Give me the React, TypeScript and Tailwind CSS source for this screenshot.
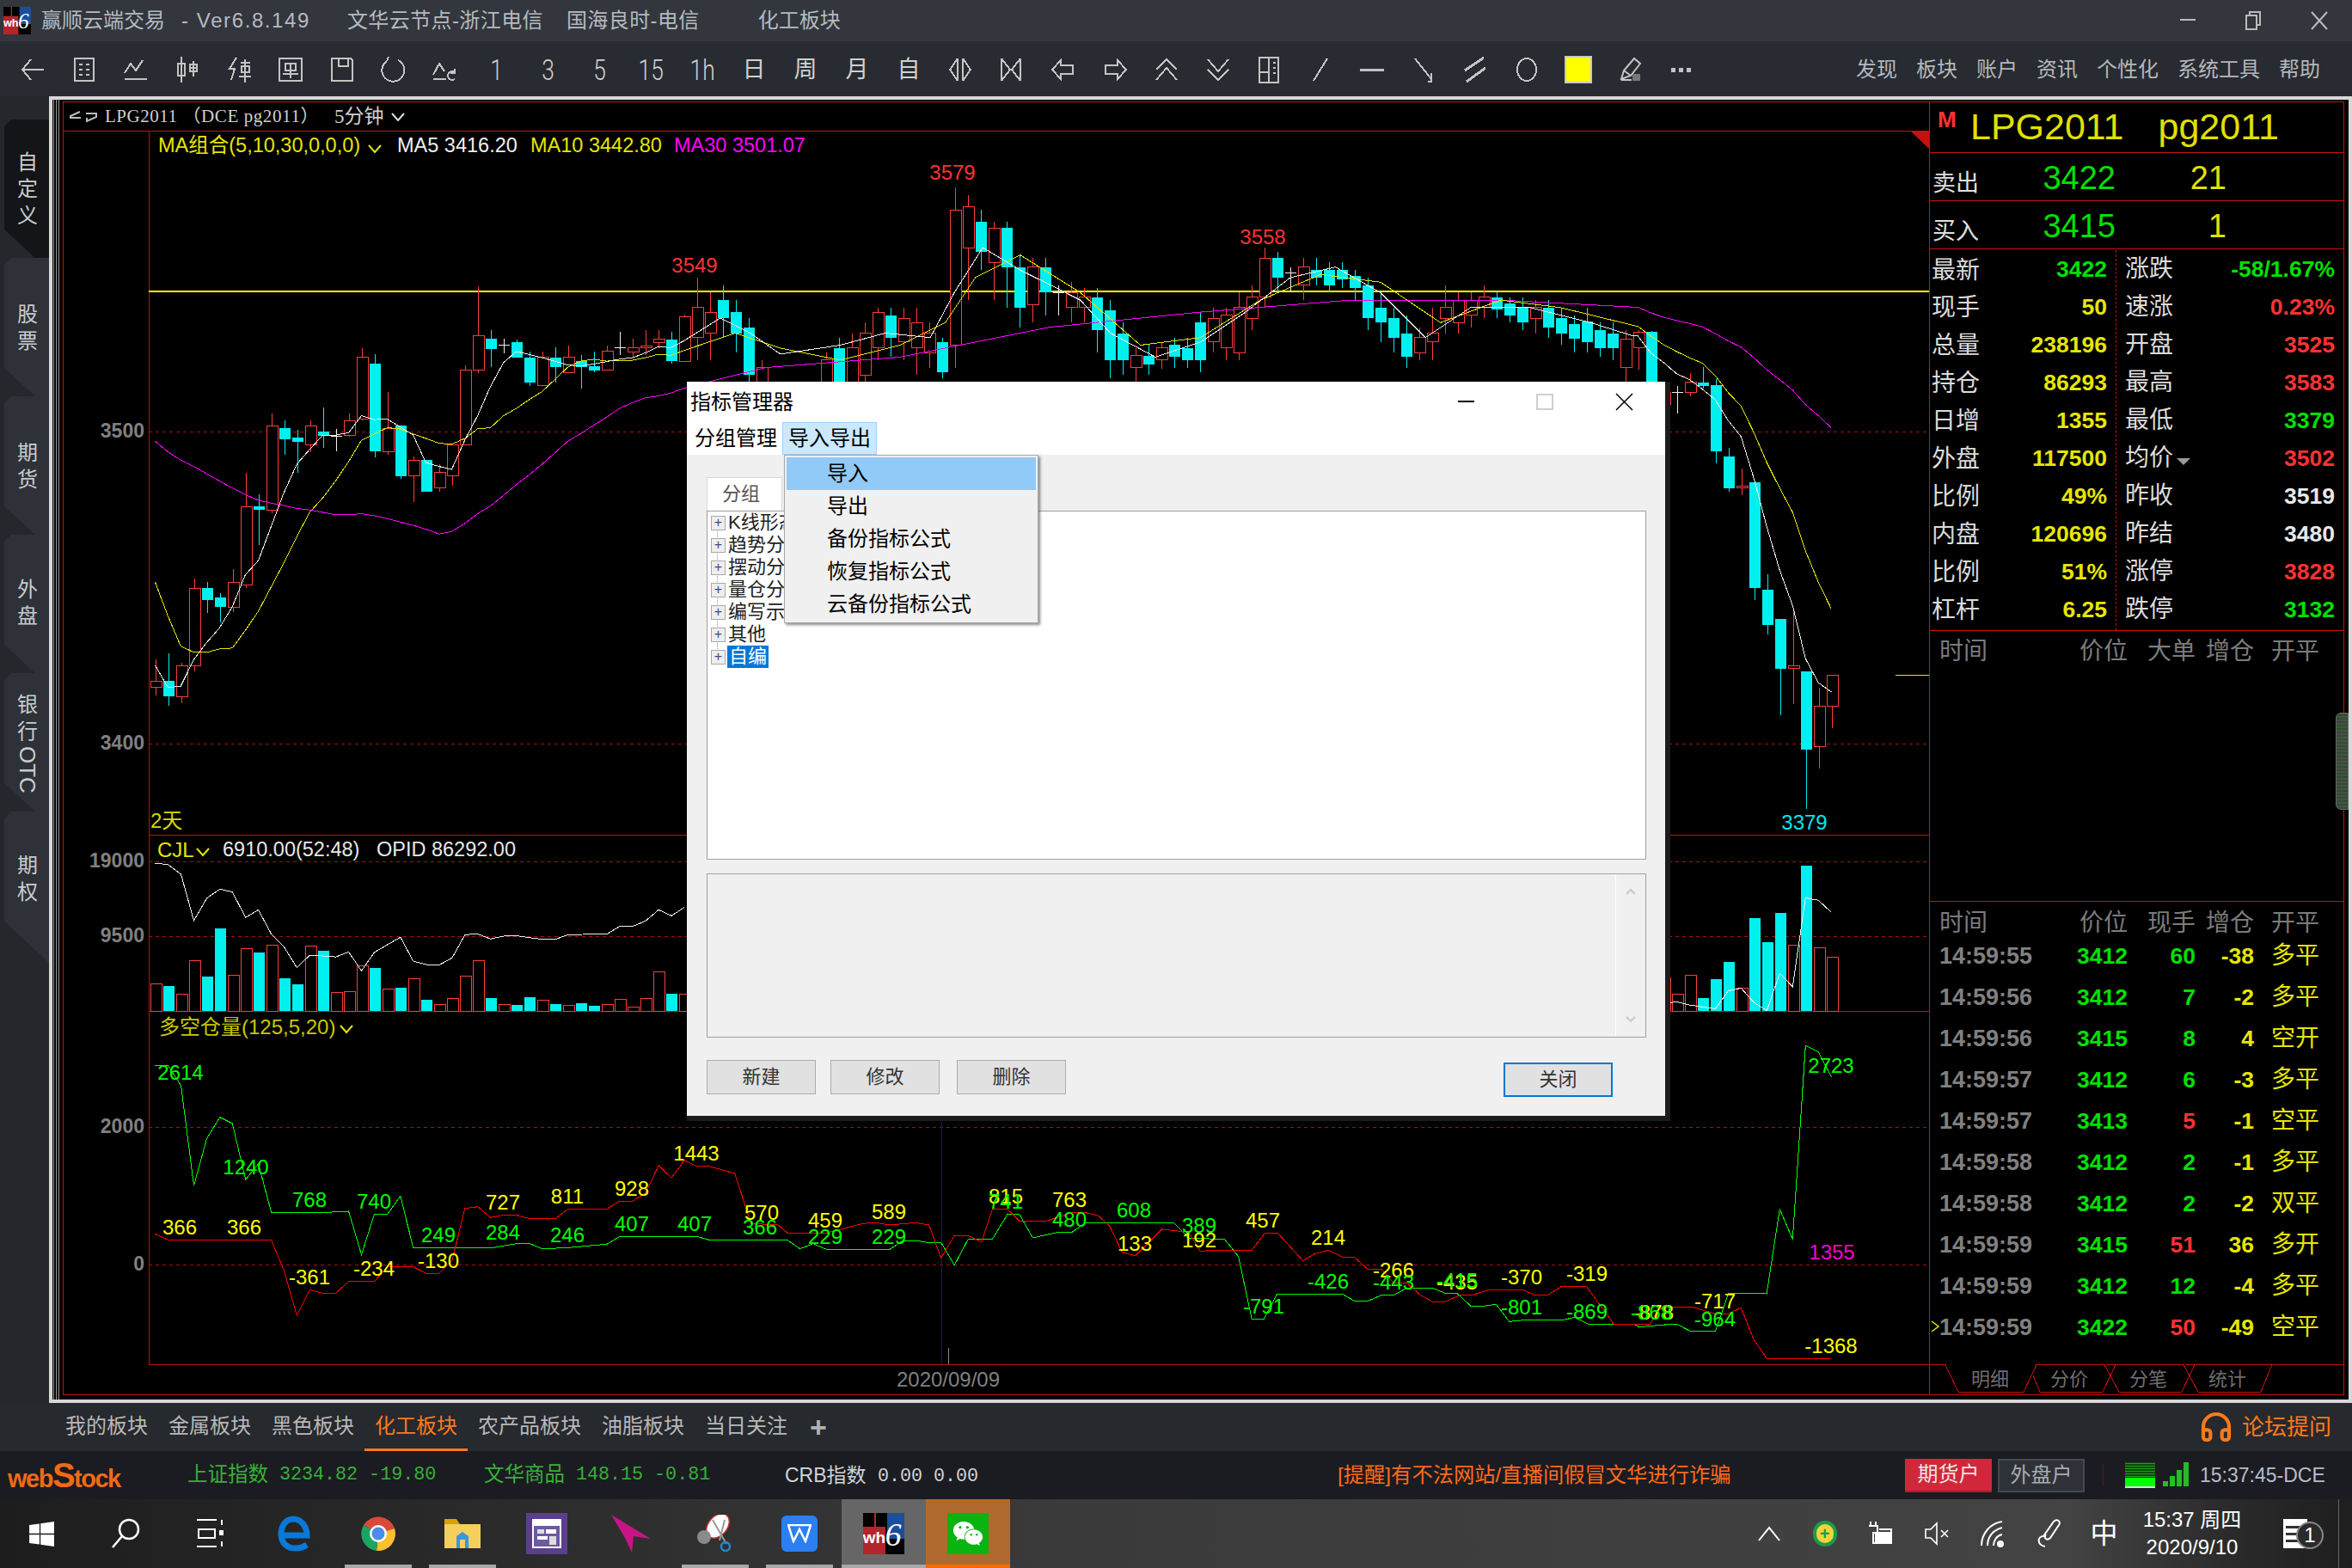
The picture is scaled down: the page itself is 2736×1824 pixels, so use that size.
import { Headphones } from "lucide-react";
import { FaWindows, FaWeixin } from "react-icons/fa";

type XY = [number, number];

// reads a flat list of points measured in a crop back to page pixels
const pts = (flat: number[], ox: number, sx: number, oy: number, sy: number): XY[] => {
  const out: XY[] = [];
  for (let i = 0; i < flat.length; i += 2) out.push([ox + flat[i] / sx, oy + flat[i + 1] / sy]);
  return out;
};
const toPoints = (p: XY[]) => p.map(([x, y]) => `${x.toFixed(1)},${y.toFixed(1)}`).join(" ");

const OV = 1.7455;

// i, wickTop, bodyTop, bodyBottom, wickBottom, colour
type Candle = [number, number, number, number, number, "r" | "c" | "w"];

const leftCandles: Candle[] = [
  [0, 1170, 1214, 1228, 1245, "r"], [1, 1157, 1214, 1246, 1266, "c"], [2, 1177, 1182, 1246, 1260, "r"],
  [3, 1002, 1022, 1182, 1195, "r"], [4, 1010, 1022, 1047, 1073, "c"], [5, 1033, 1041, 1061, 1093, "c"],
  [6, 983, 1010, 1061, 1072, "r"], [7, 783, 854, 1015, 1022, "r"], [8, 828, 853, 860, 932, "c"],
  [9, 660, 687, 860, 867, "r"], [10, 674, 691, 713, 745, "c"], [11, 695, 711, 720, 783, "c"],
  [12, 675, 687, 726, 740, "r"], [13, 648, 698, 707, 732, "c"], [14, 692, 708, 708, 738, "w"],
  [15, 660, 675, 706, 708, "r"], [16, 525, 544, 672, 675, "r"], [17, 538, 558, 739, 752, "c"],
  [18, 615, 692, 739, 745, "r"], [19, 686, 686, 791, 795, "c"], [20, 750, 758, 790, 843, "r"],
  [21, 757, 757, 822, 822, "c"], [22, 765, 783, 815, 822, "r"], [23, 725, 726, 790, 810, "r"],
  [24, 560, 571, 726, 727, "r"], [25, 397, 500, 571, 577, "r"], [26, 487, 506, 526, 565, "c"],
  [27, 505, 519, 519, 535, "w"], [28, 507, 512, 544, 545, "c"], [29, 532, 544, 597, 604, "c"],
  [30, 532, 544, 603, 604, "r"], [31, 524, 544, 565, 597, "c"], [32, 519, 544, 576, 577, "r"],
  [33, 540, 552, 565, 608, "c"], [34, 532, 563, 572, 575, "c"], [35, 520, 532, 571, 571, "r"],
  [36, 492, 524, 524, 540, "w"], [37, 506, 525, 533, 544, "r"], [38, 487, 520, 525, 540, "r"],
  [39, 487, 507, 513, 525, "r"], [40, 492, 507, 552, 558, "c"], [41, 455, 461, 552, 552, "r"],
];

// the stretch above the dialog, read from the full picture
const midCandles: Candle[] = [
  [42, 185, 205, 225, 240, "r"], [43, 195, 208, 222, 240, "r"], [44, 190, 200, 212, 225, "c"],
  [45, 200, 208, 222, 235, "c"], [46, 212, 218, 250, 260, "c"], [47, 240, 245, 260, 260, "r"],
  [52, 235, 240, 260, 260, "r"], [53, 225, 232, 255, 260, "c"], [54, 222, 232, 255, 260, "r"],
  [55, 215, 222, 250, 260, "r"], [56, 205, 208, 232, 240, "r"], [57, 205, 210, 225, 238, "c"],
  [59, 205, 215, 232, 250, "r"], [60, 215, 222, 235, 245, "r"], [61, 225, 228, 248, 252, "c"],
  [62, 125, 140, 230, 245, "r"], [63, 130, 138, 165, 200, "r"], [64, 140, 148, 168, 180, "c"],
  [65, 148, 152, 175, 200, "r"], [66, 148, 152, 178, 205, "c"], [67, 170, 178, 205, 218, "c"],
  [68, 172, 178, 203, 215, "r"], [69, 172, 178, 195, 210, "c"], [70, 190, 195, 197, 210, "w"],
  [71, 188, 195, 205, 215, "r"], [72, 192, 198, 205, 215, "r"], [73, 192, 198, 220, 235, "c"],
  [74, 200, 207, 240, 252, "c"], [75, 215, 222, 240, 250, "c"], [76, 232, 237, 245, 255, "r"],
  [77, 230, 237, 243, 250, "c"], [78, 228, 232, 240, 246, "r"], [79, 225, 230, 238, 245, "c"],
  [80, 225, 232, 240, 245, "c"], [81, 208, 215, 240, 248, "c"], [82, 205, 212, 228, 235, "r"],
  [83, 205, 210, 232, 240, "r"], [84, 195, 205, 235, 240, "r"], [85, 190, 198, 212, 220, "r"],
  [86, 165, 172, 198, 205, "r"], [87, 168, 172, 185, 195, "c"], [88, 178, 182, 186, 195, "w"],
  [89, 172, 178, 190, 200, "r"], [90, 172, 180, 185, 190, "c"], [91, 175, 180, 190, 195, "c"],
  [92, 175, 180, 186, 192, "c"], [93, 180, 184, 192, 200, "c"], [94, 185, 190, 212, 220, "c"],
  [95, 195, 205, 215, 228, "c"], [96, 205, 212, 225, 235, "c"], [97, 210, 222, 238, 245, "c"],
  [98, 218, 225, 235, 240, "r"], [99, 205, 222, 228, 240, "r"], [100, 190, 205, 212, 222, "r"],
  [101, 195, 200, 215, 222, "r"], [102, 195, 200, 210, 218, "r"], [103, 190, 198, 205, 212, "r"],
  [104, 195, 198, 206, 212, "c"], [105, 198, 202, 210, 215, "c"], [106, 198, 205, 215, 220, "c"],
  [107, 200, 205, 212, 222, "r"], [108, 200, 205, 218, 225, "c"], [109, 205, 212, 222, 230, "c"],
  [110, 210, 216, 226, 235, "c"], [111, 205, 214, 228, 235, "c"], [112, 215, 220, 232, 238, "c"],
  [113, 215, 222, 232, 240, "c"], [114, 220, 226, 245, 255, "r"], [58, 205, 212, 228, 240, "r"],
];

const rightCandles: Candle[] = [
  [115, 488, 492, 525, 570, "r"], [116, 490, 492, 620, 620, "c"], [117, 600, 616, 642, 650, "r"],
  [118, 603, 616, 616, 660, "w"], [119, 577, 596, 616, 624, "r"], [120, 564, 596, 604, 608, "c"],
  [121, 590, 602, 738, 764, "c"], [122, 732, 750, 815, 822, "c"], [123, 775, 810, 815, 829, "r"],
  [124, 802, 802, 1022, 1047, "c"], [125, 994, 1026, 1098, 1118, "c"], [126, 1085, 1085, 1189, 1285, "c"],
  [127, 1065, 1182, 1189, 1262, "r"], [128, 1194, 1194, 1357, 1480, "c"], [129, 1228, 1266, 1350, 1396, "r"],
  [130, 1202, 1202, 1266, 1312, "r"],
];

const candles: Candle[] = [
  ...leftCandles.map((c) => [c[0], ...c.slice(1, 5).map((v) => 110 + (v as number) / 1.78), c[5]] as Candle),
  ...midCandles.map((c) => [c[0], ...c.slice(1, 5).map((v) => (v as number) * OV), c[5]] as Candle),
  ...rightCandles.map((c) => [c[0], ...c.slice(1, 5).map((v) => 110 + (v as number) / 1.78), c[5]] as Candle),
];

const ma5: XY[] = [
  ...pts([354,1182,383,1228,412,1225,442,1170,471,1135,500,1105,530,1060,559,995,589,965,618,895,647,825,677,765,706,735,736,705,765,705,795,700,824,665,853,673,883,672,912,688,942,705,971,762,1001,770,1030,776,1060,715,1089,665,1118,605,1148,555,1177,532,1206,538,1236,545,1265,552,1294,560,1324,562,1353,558,1383,553,1412,548,1442,545,1471,535,1500,522,1530,524,1559,510], 0, 1.96, 110, 1.78),
  ...pts([480,212,500,222,520,236,560,230,590,222,620,225,636,195,655,165,680,180,700,190,720,200,740,222,770,238,800,228,830,208,860,185,890,178,920,195,950,225,980,205,1020,205,1060,215], 0, 1 / OV, 0, 1 / OV),
  ...pts([0,500,16,500,61,535,106,555,151,578,196,590,241,610,286,632,331,675,376,708,421,795,466,895,511,985,556,1058,601,1168,646,1218,691,1237], 1900, 3, 110, 1.78),
];
const ma10: XY[] = [
  ...pts([354,1010,383,1080,412,1142,442,1155,471,1155,500,1148,530,1146,559,1110,589,1070,618,1020,647,970,677,915,706,865,736,835,765,800,795,760,824,716,853,703,883,690,912,692,942,703,971,712,1001,722,1030,724,1060,712,1089,692,1118,690,1148,665,1177,650,1206,632,1236,615,1265,590,1294,565,1324,552,1353,548,1383,552,1412,550,1442,550,1471,545,1500,538,1530,540,1559,530], 0, 1.96, 110, 1.78),
  ...pts([490,222,520,232,560,240,600,230,630,215,650,185,680,170,720,195,760,230,800,225,840,200,880,183,920,188,960,215,1000,200,1040,205], 0, 1 / OV, 0, 1 / OV),
  ...pts([0,478,16,480,61,500,106,518,151,532,196,545,241,556,286,582,331,617,376,645,421,700,466,762,511,815,556,865,601,945,646,1010,691,1065], 1900, 3, 110, 1.78),
];
const ma30: XY[] = [
  ...pts([354,718,383,740,412,757,442,770,471,785,500,800,530,815,559,828,589,840,618,846,647,851,677,857,706,860,736,865,765,870,795,870,824,868,853,872,883,878,912,885,942,892,971,900,1001,910,1030,905,1060,888,1089,868,1118,852,1148,830,1177,808,1206,788,1236,765,1265,742,1294,718,1324,702,1353,685,1383,668,1412,650,1442,638,1471,628,1500,624,1530,618,1559,608], 0, 1.96, 110, 1.78),
  ...pts([510,245,600,238,700,218,800,208,900,200,1000,200], 0, 1 / OV, 0, 1 / OV),
  ...pts([0,440,16,440,61,452,106,461,151,468,196,474,241,481,286,495,331,510,376,523,421,545,466,570,511,590,556,612,601,642,646,665,691,690], 1900, 3, 110, 1.78),
];

const volumes: [number, string][] = [
  [452,"r"],[458,"c"],[481,"r"],[386,"r"],[431,"c"],[294,"c"],[427,"r"],[351,"r"],[363,"c"],[342,"r"],[436,"c"],[453,"c"],[344,"r"],[358,"c"],[476,"r"],[474,"r"],[400,"r"],[407,"c"],[466,"r"],[463,"c"],[437,"r"],[497,"c"],[511,"r"],[493,"r"],[430,"r"],[386,"r"],[492,"c"],[511,"r"],[512,"c"],[490,"c"],[498,"r"],[510,"c"],[513,"r"],[507,"c"],[514,"c"],[511,"r"],[496,"r"],[518,"r"],[493,"r"],[417,"r"],[480,"c"],[481,"r"],
];
const volumesRight: [number, number, string][] = [
  [117,435,"r"],[118,481,"r"],[119,427,"r"],[120,492,"c"],[121,439,"c"],[122,390,"c"],[123,464,"r"],[124,265,"c"],[125,333,"c"],[126,250,"c"],[127,342,"r"],[128,115,"c"],[129,349,"r"],[130,376,"r"],
];
const volLine: XY[] = [
  ...pts([73,108,110,112,146,140,182,272,218,208,255,182,290,190,327,263,363,241,399,310,435,347,471,406,507,370,580,375,616,361,652,415,688,362,761,319,797,387,833,397,870,398,906,378,942,312,978,310,1014,324,1050,316,1086,315,1159,325,1195,325,1231,312,1340,310,1376,288,1412,288,1448,273,1485,241,1521,258,1557,234], 150, 2.41, 960, 2.45),
];
const volLineRight: XY[] = pts([120,507,151,503,196,512,241,518,286,523,331,472,376,464,421,505,466,528,511,422,556,460,601,207,646,214,691,248], 1900, 3, 960, 2.45);

const greenLine: XY[] = [
  ...pts([73,685,110,685,146,742,182,1027,218,893,255,832,290,850,327,1010,363,965,399,1103,435,1103,561,1103,616,1100,652,1224,688,1108,725,1108,761,1057,797,1204,1020,1204,1090,1192,1123,1192,1159,1207,1231,1204,1340,1194,1376,1172,1557,1172], 150, 2.41, 960, 2.45),
  ...pts([0,445,15,445,35,457,165,457,186,488,208,470,230,490,335,490,356,460,380,460,398,466,420,466,442,545,465,454,505,454,530,368,550,368,572,450,615,430,637,430,660,397,806,397,830,450,890,455,913,515,935,733,955,733,977,646,1085,646,1105,670,1128,670,1150,650,1170,650,1192,625,1235,625,1255,643,1275,643,1298,688,1320,688,1340,682,1362,742,1385,737,1450,737,1470,727,1492,750,1568,750], 800, 1.425, 1290, 3),
  ...pts([20,1430,130,1422,152,1422,197,1441,287,1441,332,1333,466,1333,511,1094,556,1180,601,628,646,646,691,717], 1900, 3, 960, 2.45),
];
const redLine: XY[] = [
  ...pts([73,1165,110,1182,399,1182,435,1270,471,1398,507,1324,544,1334,580,1334,616,1300,688,1300,725,1258,797,1258,833,1277,870,1277,906,1240,942,1092,978,1087,1014,1118,1050,1111,1086,1111,1123,1121,1195,1121,1231,1094,1340,1094,1376,1071,1412,1071,1448,1048,1485,970,1521,1005,1557,955], 150, 2.41, 960, 2.45),
  ...pts([0,185,15,200,35,200,78,225,105,400,150,405,165,433,230,433,290,400,312,397,335,405,378,397,400,405,420,520,442,442,465,442,487,465,505,350,530,350,550,391,595,391,640,360,660,362,680,372,700,410,720,500,742,512,786,420,830,430,850,497,870,493,935,493,957,433,978,433,1020,530,1040,505,1062,493,1085,517,1105,517,1128,560,1150,560,1170,607,1192,607,1215,650,1235,673,1255,673,1280,650,1300,650,1325,633,1385,632,1405,650,1425,650,1448,620,1490,620,1535,750], 800, 1.425, 1290, 3),
  ...pts([60,1421,85,1380,130,1373,205,1373,285,1392,332,1392,376,1375,420,1465,466,1520,691,1520], 1900, 3, 960, 2.45),
];

const GREEN = "#00ff00";
const YEL = "#ffff00";
const oscLabels: [string, number, number, string][] = [
  ["2614",210,1248,GREEN],["1240",286,1358,GREEN],["768",360,1396,GREEN],["740",435,1398,GREEN],["366",209,1428,YEL],["366",284,1428,YEL],
  ["249",510,1437,GREEN],["727",585,1399,YEL],["811",660,1392,YEL],["928",735,1383,YEL],["284",585,1434,GREEN],["246",660,1437,GREEN],
  ["407",735,1424,GREEN],["407",808,1424,GREEN],["-361",360,1486,YEL],["-234",435,1476,YEL],["-130",510,1467,YEL],["1443",810,1342,YEL],
  ["570",886,1411,YEL],["366",884,1428,GREEN],["459",960,1420,YEL],["229",960,1439,GREEN],["589",1034,1410,YEL],["229",1034,1439,GREEN],
  ["815",1170,1392,YEL],["741",1170,1398,GREEN],["763",1244,1396,YEL],["480",1244,1419,GREEN],["608",1319,1408,GREEN],["133",1320,1447,YEL],
  ["389",1395,1426,GREEN],["192",1395,1443,YEL],["457",1469,1420,YEL],["214",1545,1440,YEL],["-791",1470,1520,GREEN],["-426",1545,1491,GREEN],
  ["-266",1621,1478,YEL],["-443",1621,1492,GREEN],["-435",1695,1492,YEL],["-415",1695,1490,GREEN],["-370",1770,1486,YEL],["-319",1846,1482,YEL],
  ["-801",1770,1521,GREEN],["-869",1846,1526,GREEN],["-878",1923,1527,YEL],["-868",1921,1527,GREEN],["-717",1995,1514,YEL],["-964",1995,1535,GREEN],
  ["2723",2130,1240,GREEN],["1355",2131,1457,"#ff00c8"],["-1368",2130,1566,YEL],
];

const sans = "font-['Liberation_Sans','Noto_Sans_CJK_SC',sans-serif]";

function Wh6Logo({ size }: { size: number }) {
  return (
    <svg width={size} height={size} viewBox="0 0 48 48" className="flex-none">
      <rect width="48" height="48" fill="#000" />
      <rect x="0" y="16" width="26" height="32" fill="#b3252a" />
      <rect x="28" y="0" width="20" height="30" fill="#1b4f9c" />
      <rect x="13" y="0" width="2" height="16" fill="#b3252a" />
      <text x="13" y="35" fontSize="19" fontWeight="700" fontFamily="Liberation Sans" fill="#fff" textAnchor="middle">wh</text>
      <text x="35" y="38" fontSize="38" fontStyle="italic" fontFamily="Liberation Serif" fill="#fff" textAnchor="middle">6</text>
    </svg>
  );
}

const toolIcons: Record<string, React.ReactNode> = {
  back: <path d="M29 16H5M14 4L4 16L14 28" />,
  list: <path d="M5 3H27V29H5ZM10 10H14M18 10H22M10 16H14M18 16H22M10 22H14M18 22H22" />,
  line: <path d="M3 20L10 9L16 17L24 5M3 27H29" />,
  kline: <path d="M9 1V31M5 9H13V23H5ZM23 6V24M19 10H27V18H19ZM19 14H27" />,
  zen: <path d="M13 2L5 15H11L7 28M18 8H29M19 12H28V19H19ZM23 4V31M16 24H30" />,
  single: <path d="M3 3H29V29H3ZM10 9H22V17H10ZM16 9V26M7 21H25" />,
  save: <path d="M4 3H26L28 5V29H4ZM12 3V12H23V3" />,
  redo: <path d="M21 5A13 13 0 1 1 8 6M8 6L10 1" />,
  exch: <path d="M3 22L10 9L16 18M3 27H18M28 19A5 5 0 1 0 28 27M28 15V20H23" />,
  fold: <path d="M13 3L4 16L13 29M19 3L28 16L19 29M13 3V29M19 3V29" />,
  unfold: <path d="M4 3L14 16L4 29M26 3L16 16L26 29M4 3V29M26 3V29" />,
  prev: <path d="M3 16L13 5V11H27V21H13V27Z" />,
  next: <path d="M29 16L19 5V11H5V21H19V27Z" />,
  up: <path d="M4 16L16 4L28 16M4 28L16 14L28 28" />,
  down: <path d="M4 4L16 18L28 4M4 16L16 28L28 16" />,
  panel: <path d="M5 2H27V31H5ZM16 2V31M5 19H16M21 8H24M21 14H24M21 20H24" />,
  slash: <path d="M8 29L24 3" />,
  dash: <path d="M2 16H30" strokeWidth="3" />,
  ray: <path d="M6 3L25 27M25 20V30H21" />,
  par: <path d="M4 17L26 2M6 30L28 14" strokeWidth="3" />,
  ellipse: <ellipse cx="16" cy="16" rx="11" ry="13" />,
  erase: <path d="M6 27L9 17L21 3L28 9L17 23ZM6 28H18M9 17L17 23" />,
};

type ToolItem = { icon?: string; label?: string };
const toolbar: ToolItem[] = [
  { icon: "back" }, { icon: "list" }, { icon: "line" }, { icon: "kline" }, { icon: "zen" }, { icon: "single" }, { icon: "save" }, { icon: "redo" }, { icon: "exch" },
  { label: "1" }, { label: "3" }, { label: "5" }, { label: "15" }, { label: "1h" }, { label: "日" }, { label: "周" }, { label: "月" }, { label: "自" },
  { icon: "fold" }, { icon: "unfold" }, { icon: "prev" }, { icon: "next" }, { icon: "up" }, { icon: "down" }, { icon: "panel" }, { icon: "slash" }, { icon: "dash" }, { icon: "ray" }, { icon: "par" }, { icon: "ellipse" },
];

function TitleBar() {
  return (
    <div className="h-12 flex-none flex items-center bg-[#33363c] text-[24px] text-[#b4bac2] pl-1 leading-none">
      <Wh6Logo size={32} />
      <span className="ml-3">赢顺云端交易</span>
      <span className="ml-[19px] tracking-[1.6px]">- Ver6.8.149</span>
      <span className="ml-[43px] tracking-[0.4px]">文华云节点-浙江电信</span>
      <span className="ml-[27px] tracking-[0.4px]">国海良时-电信</span>
      <span className="ml-[68px]">化工板块</span>
      <div className="ml-auto flex">
        <div className="w-[76.5px] flex justify-center">
          <svg width="22" height="22" viewBox="0 0 22 22"><path d="M2 11H20" stroke="#bbb" strokeWidth="2" /></svg>
        </div>
        <div className="w-[76.5px] flex justify-center">
          <svg width="22" height="24" viewBox="0 0 22 24" fill="none" stroke="#bbb" strokeWidth="2"><path d="M3 6H15V22H3ZM7 6V2H19V17H15" /></svg>
        </div>
        <div className="w-[76.5px] flex justify-center">
          <svg width="24" height="24" viewBox="0 0 24 24" fill="none" stroke="#bbb" strokeWidth="2"><path d="M3 2L21 22M21 2L3 22" /></svg>
        </div>
      </div>
    </div>
  );
}

function Toolbar() {
  return (
    <div className="h-16 flex-none flex items-center bg-[#282b31] pl-[8px] pr-[37px] pt-[2px] text-[#d0d0d0] leading-none">
      {toolbar.map((t, i) => (
        <div key={i} className="w-[59.95px] flex-none flex justify-center items-center">
          {t.icon ? (
            <svg width="32" height="32" viewBox="0 0 32 32" fill="none" stroke="#c4c4c4" strokeWidth="2" shapeRendering="crispEdges">
              {toolIcons[t.icon]}
            </svg>
          ) : /^[0-9]/.test(t.label ?? "") ? (
            <span className="inline-block text-[31px] font-light font-['Roboto',sans-serif] scale-x-[0.85] scale-y-[1.05]">{t.label}</span>
          ) : (
            <span className="text-[27px]">{t.label}</span>
          )}
        </div>
      ))}
      <div className="w-[59.95px] flex-none flex justify-center">
        <div className="w-8 h-8 bg-[#ffff00] border-2 border-[#c8c8c8]" />
      </div>
      <div className="w-[59.95px] flex-none flex justify-center">
        <svg width="32" height="32" viewBox="0 0 32 32" fill="none" stroke="#c4c4c4" strokeWidth="2">
          {toolIcons.erase}
          <rect x="19" y="21" width="9" height="8" fill="#777" stroke="none" />
        </svg>
      </div>
      <div className="w-[59.95px] flex-none flex justify-center gap-[4px]">
        <div className="w-[5px] h-[5px] bg-[#c4c4c4]" />
        <div className="w-[5px] h-[5px] bg-[#c4c4c4]" />
        <div className="w-[5px] h-[5px] bg-[#c4c4c4]" />
      </div>
      <div className="ml-auto flex gap-[22px] text-[24px] text-[#b4b8bc]">
        <span>发现</span><span>板块</span><span>账户</span><span>资讯</span><span>个性化</span><span>系统工具</span><span>帮助</span>
      </div>
    </div>
  );
}

function SideTabs() {
  const tabs: { lines: string[]; cls: string }[] = [
    { lines: ["自", "定", "义"], cls: "pt-[34px] bg-[#141518]" },
    { lines: ["股", "票"], cls: "pt-[50px] bg-[#2e3138]" },
    { lines: ["期", "货"], cls: "pt-[50px] bg-[#2e3138]" },
    { lines: ["外", "盘"], cls: "pt-[48px] bg-[#2e3138]" },
    { lines: ["银", "行"], cls: "pt-[21px] bg-[#2e3138]" },
    { lines: ["期", "权"], cls: "pt-[47px] bg-[#2e3138]" },
  ];
  return (
    <div className="w-[57px] flex-none bg-[#24272c] pt-[27px] pl-[5px] flex flex-col text-[#c9cbce] text-[24px]">
      {tabs.map((t, i) => (
        <div key={i} className={`h-[176px] mb-[-15px] flex-none flex flex-col items-center pl-[2px] leading-[31px] [clip-path:polygon(8px_0,100%_0,100%_100%,0_calc(100%-48px),0_8px)] ${t.cls}`}>
          {t.lines.map((l) => <span key={l}>{l}</span>)}
          {i === 4 && <span className="[writing-mode:vertical-rl] text-[26px] leading-none mt-[2px]">OTC</span>}
        </div>
      ))}
    </div>
  );
}

function Txt(props: { x: number; y: number; c: string; t: string; size?: number; bold?: boolean; anchor?: "start" | "middle" | "end"; }) {
  return (
    <text x={props.x} y={props.y - 1} fill={props.c} fontSize={props.size ?? 24} fontWeight={props.bold ? 700 : 400} textAnchor={props.anchor ?? "middle"} dominantBaseline="central">
      {props.t}
    </text>
  );
}

function Chevron({ x, y, c }: { x: number; y: number; c: string }) {
  return <polyline points={`${x},${y} ${x + 7},${y + 8} ${x + 14},${y}`} fill="none" stroke={c} strokeWidth="2" />;
}

function PriceChart() {
  const PLOT_L = 173;
  const dashes = [502, 865, 1002, 1089, 1311, 1471];
  const solids = [971, 1176, 1587];
  const cx = (i: number) => Math.round(180.6 + 15 * i);
  const colour = { r: "#ff3c3c", c: "#00f0f0", w: "#f0f0f0" };
  return (
    <svg viewBox="74 153 2170 1469" width="2170" height="1469" className={`block flex-none ${sans}`}>
      <line x1={PLOT_L} x2={PLOT_L} y1="153" y2="1587" stroke="#c01010" strokeWidth="1" shapeRendering="crispEdges" />
      {dashes.map((y) => (
        <line key={y} x1={PLOT_L} x2="2244" y1={y} y2={y} stroke="#a81010" strokeDasharray="4 4" shapeRendering="crispEdges" />
      ))}
      {solids.map((y) => (
        <line key={y} x1={PLOT_L} x2="2244" y1={y} y2={y} stroke="#c01010" strokeWidth="1" shapeRendering="crispEdges" />
      ))}
      <line x1={PLOT_L} x2="2244" y1="339" y2="339" stroke="#ffff00" strokeWidth="2" shapeRendering="crispEdges" />
      <line x1="2205" x2="2244" y1="785" y2="785" stroke="#e6e600" shapeRendering="crispEdges" />
      <polygon points="2223,153 2244,153 2244,173" fill="#c81010" />
      <line x1="1095" x2="1095" y1="1299" y2="1587" stroke="#14148c" shapeRendering="crispEdges" />
      <line x1="1103" x2="1103" y1="1568" y2="1587" stroke="#888" shapeRendering="crispEdges" />

      <g shapeRendering="crispEdges">
        {candles.map(([i, wt, bt, bb, wb, k]) => {
          const x = cx(i);
          const c = colour[k];
          return (
            <g key={i}>
              <line x1={x + 0.5} x2={x + 0.5} y1={wt} y2={wb} stroke={c} strokeWidth="1" />
              {k === "w" ? (
                <line x1={x - 6} x2={x + 7} y1={bt} y2={bt} stroke={c} strokeWidth="1" />
              ) : (
                <rect x={x - 6} y={bt} width="13" height={Math.max(bb - bt, 2)} fill={k === "c" ? c : "#000"} stroke={k === "c" ? "none" : c} strokeWidth="1" />
              )}
            </g>
          );
        })}
        {volumes.map(([top, k], i) => {
          const y = 960 + top / 2.45;
          const x = cx(i);
          return <rect key={i} x={x - 6} y={y} width="13" height={1176 - y} fill={k === "c" ? colour.c : "#000"} stroke={k === "c" ? "none" : colour.r} strokeWidth="1" />;
        })}
        {volumesRight.map(([i, top, k]) => {
          const y = 960 + top / 2.45;
          const x = cx(i);
          return <rect key={i} x={x - 6} y={y} width="13" height={1176 - y} fill={k === "c" ? colour.c : "#000"} stroke={k === "c" ? "none" : colour.r} strokeWidth="1" />;
        })}
        <polyline points={toPoints(ma30)} fill="none" stroke="#ff00ff" />
        <polyline points={toPoints(ma10)} fill="none" stroke="#e6e600" />
        <polyline points={toPoints(ma5)} fill="none" stroke="#f0f0f0" />
        <polyline points={toPoints(volLine)} fill="none" stroke="#f0f0f0" />
        <polyline points={toPoints(volLineRight)} fill="none" stroke="#f0f0f0" />
        <polyline points={toPoints(greenLine)} fill="none" stroke="#00ff00" />
        <polyline points={toPoints(redLine)} fill="none" stroke="#ff0000" />
      </g>

      <Txt x={184} y={170} c="#e6e600" t="MA组合(5,10,30,0,0,0)" anchor="start" size={23.5} />
      <Chevron x={429} y={169} c="#e6e600" />
      <Txt x={462} y={170} c="#f0f0f0" t="MA5 3416.20" anchor="start" size={23.5} />
      <Txt x={617} y={170} c="#e6e600" t="MA10 3442.80" anchor="start" size={23.5} />
      <Txt x={784} y={170} c="#ff00ff" t="MA30 3501.07" anchor="start" size={23.5} />

      <Txt x={168} y={502} c="#808080" t="3500" bold anchor="end" size={23} />
      <Txt x={168} y={865} c="#808080" t="3400" bold anchor="end" size={23} />
      <Txt x={168} y={1002} c="#808080" t="19000" bold anchor="end" size={23} />
      <Txt x={168} y={1089} c="#808080" t="9500" bold anchor="end" size={23} />
      <Txt x={168} y={1311} c="#808080" t="2000" bold anchor="end" size={23} />
      <Txt x={168} y={1471} c="#808080" t="0" bold anchor="end" size={23} />

      <Txt x={808} y={309} c="#ff3232" t="3549" />
      <Txt x={1108} y={201} c="#ff3232" t="3579" />
      <Txt x={1469} y={276} c="#ff3232" t="3558" />
      <Txt x={2099} y={957} c="#00e8f0" t="3379" />
      <Txt x={175} y={955} c="#d8d800" t="2天" anchor="start" />

      <Txt x={183} y={989} c="#e6e600" t="CJL" anchor="start" />
      <Chevron x={229} y={987} c="#e6e600" />
      <Txt x={259} y={989} c="#e8e8e8" t="6910.00(52:48)" anchor="start" size={23.5} />
      <Txt x={438} y={989} c="#e8e8e8" t="OPID 86292.00" anchor="start" size={23.5} />

      <Txt x={185} y={1195} c="#c8c800" t="多空仓量(125,5,20)" anchor="start" />
      <Chevron x={396} y={1193} c="#e6e600" />

      {oscLabels.map(([t, x, y, c], i) => <Txt key={i} x={x} y={y} c={c} t={t} />)}

      <Txt x={1103} y={1605} c="#808080" t="2020/09/09" />
    </svg>
  );
}

function ChartPane() {
  return (
    <div className="w-[2170px] flex-none flex flex-col">
      <div className={`h-[34px] flex-none flex items-center border-b border-[#c81010] pl-[6px] text-[21px] leading-none text-[#d0d0d0] font-['Liberation_Serif','Noto_Sans_CJK_SC',serif]`}>
        <svg width="34" height="14" viewBox="0 0 34 14" fill="none" stroke="#bbb" strokeWidth="2"><path d="M13 1L2 6V8H14M20 3H32V7L21 12V8" /></svg>
        <span className="ml-[8px] tracking-[0.5px]">LPG2011</span>
        <span className="ml-[6px] tracking-[0.6px]">（DCE pg2011）</span>
        <span className="ml-[18px] text-[23px]">5分钟</span>
        <svg className="ml-[8px]" width="16" height="10" viewBox="0 0 16 10" fill="none" stroke="#ddd" strokeWidth="2"><path d="M1 1L8 9L15 1" /></svg>
      </div>
      <PriceChart />
    </div>
  );
}

const G = "text-[#00e000]";
const Y = "text-[#e6e600]";
const R = "text-[#ff3232]";
const W = "text-[#e8e8e8]";

const quoteRows: [string, string, string, string, string, boolean?][] = [
  ["最新", "3422", "涨跌", "-58/1.67%", G],
  ["现手", "50", "速涨", "0.23%", R],
  ["总量", "238196", "开盘", "3525", R],
  ["持仓", "86293", "最高", "3583", R],
  ["日增", "1355", "最低", "3379", G],
  ["外盘", "117500", "均价", "3502", R, true],
  ["比例", "49%", "昨收", "3519", W],
  ["内盘", "120696", "昨结", "3480", W],
  ["比例", "51%", "涨停", "3828", R],
  ["杠杆", "6.25", "跌停", "3132", G],
];

const ticks: [string, string, string, string, string, string][] = [
  ["14:59:55", "3412", "60", "-38", "多平", G],
  ["14:59:56", "3412", "7", "-2", "多平", G],
  ["14:59:56", "3415", "8", "4", "空开", G],
  ["14:59:57", "3412", "6", "-3", "多平", G],
  ["14:59:57", "3413", "5", "-1", "空平", R],
  ["14:59:58", "3412", "2", "-1", "多平", G],
  ["14:59:58", "3412", "2", "-2", "双平", G],
  ["14:59:59", "3415", "51", "36", "多开", R],
  ["14:59:59", "3412", "12", "-4", "多平", G],
  ["14:59:59", "3422", "50", "-49", "空平", R],
];

const tickCols = "grid grid-cols-[155px_75px_79px_68px_76px] items-center";

function TickHeader({ third, cls }: { third: string; cls?: string }) {
  return (
    <div className={`${tickCols} h-[48px] flex-none text-[28px] leading-none text-[#7c7c7c] ${cls ?? ""}`}>
      <span className="pl-[11px]">时间</span>
      <span className="text-right">价位</span>
      <span className="text-right">{third}</span>
      <span className="text-right">增仓</span>
      <span className="text-right">开平</span>
    </div>
  );
}

function QuotePanel() {
  return (
    <div className={`w-[482px] flex-none border-l border-[#c81010] flex flex-col ${sans} leading-none`}>
      <div className="h-[59px] flex-none flex border-b border-[#c81010] relative text-[#e0e000] text-[43px]">
        <span className="absolute left-[9px] top-[7px] text-[#ff3232] text-[26px] font-bold">M</span>
        <span className="ml-[47px] mt-[7px]">LPG2011</span>
        <span className="ml-[40px] mt-[7px]">pg2011</span>
      </div>
      {[["卖出", "3422", "21"], ["买入", "3415", "1"]].map(([label, price, vol]) => (
        <div key={label} className="h-[56px] flex-none flex items-center border-b border-[#c81010] pl-[3px] text-[#e0e0e0]">
          <span className="text-[27px] pt-[16px] w-[128px]">{label}</span>
          <span className="text-[38px] pt-[3px] text-[#00e000] w-[85px] text-right">{price}</span>
          <span className="text-[38px] pt-[3px] text-[#e0e000] w-[129px] text-right">{vol}</span>
        </div>
      ))}
      <div className="h-[444px] flex-none grid grid-cols-[217px_1fr] border-b border-[#c81010] pt-[1px]">
        <div className="border-r border-dashed border-[#c81010] flex flex-col pl-[2px] pr-[10px]">
          {quoteRows.map((r, i) => (
            <div key={i} className="h-[44px] flex-none flex items-center justify-between">
              <span className={`text-[28px] text-[#dcdcdc] ${i === 0 ? "pt-[4px]" : "pt-[1px]"}`}>{r[0]}</span>
              <span className={`text-[26.5px] font-bold ${i === 0 ? G : Y}`}>{r[1]}</span>
            </div>
          ))}
        </div>
        <div className="flex flex-col pl-[10px] pr-[10px]">
          {quoteRows.map((r, i) => (
            <div key={i} className="h-[44px] flex-none flex items-center">
              <span className="text-[28px] text-[#dcdcdc]">{r[2]}</span>
              {r[5] && <span className="ml-[4px] mt-[8px] w-0 h-0 border-x-[8px] border-x-transparent border-t-[8px] border-t-[#999]" />}
              <span className={`ml-auto text-[26.5px] font-bold ${r[4]}`}>{r[3]}</span>
            </div>
          ))}
        </div>
      </div>
      <div className="h-[315px] flex-none border-b border-[#c81010]">
        <TickHeader third="大单" />
      </div>
      <div className="flex-1 flex flex-col pt-[1px]">
        <TickHeader third="现手" cls="mb-[-10px]" />
        {ticks.map((t, i) => (
          <div key={i} className={`${tickCols} h-[48px] flex-none text-[26.5px] font-bold relative`}>
            {i === ticks.length - 1 && (
              <svg className="absolute left-[1px] top-[16px]" width="10" height="14" viewBox="0 0 10 14" fill="none" stroke="#e6e600" strokeWidth="1.5"><path d="M1 1L9 7L1 13" /></svg>
            )}
            <span className="pl-[11px] text-[#808080] text-[27px]">{t[0]}</span>
            <span className={`text-right ${G}`}>{t[1]}</span>
            <span className={`text-right ${t[5]}`}>{t[2]}</span>
            <span className={`text-right ${Y}`}>{t[3]}</span>
            <span className={`text-right ${Y} text-[28px] font-normal`}>{t[4]}</span>
          </div>
        ))}
      </div>
      <div className="h-[35px] flex-none relative">
        <svg className="absolute -left-[40px] top-0" width="522" height="35" viewBox="2204 1587 522 35" fill="none" stroke="#c81010" shapeRendering="crispEdges">
          <path d="M2204 1587.5H2262L2277 1619H2353L2368 1587.5M2364 1600L2372 1619H2445L2460 1587.5M2368 1587.5H2447L2464 1619H2537L2552 1587.5M2449 1587.5H2539L2556 1619H2629L2642 1587.5M2541 1587.5H2726" />
        </svg>
        <div className="absolute inset-0 flex text-[22px] text-[#6e6e6e] items-center">
          <span className="absolute left-[48px]">明细</span>
          <span className="absolute left-[140px]">分价</span>
          <span className="absolute left-[232px]">分笔</span>
          <span className="absolute left-[324px]">统计</span>
        </div>
      </div>
    </div>
  );
}

function IndicatorDialog() {
  const groups = ["K线形态", "趋势分析", "摆动分析", "量仓分析", "编写示范", "其他"];
  const menu = ["导入", "导出", "备份指标公式", "恢复指标公式", "云备份指标公式"];
  return (
    <div className={`absolute left-[799px] top-[444px] w-[1144px] h-[860px] border-r-[6px] border-b-[6px] border-[#1c1c1c] bg-[#f0f0f0] flex flex-col text-black leading-none ${sans}`}>
      <div className="h-[47px] flex-none bg-white flex items-center text-[24px] pl-[4px] relative">
        <span>指标管理器</span>
        <div className="absolute left-[897px] top-[22px] w-[19px] h-[2px] bg-black" />
        <div className="absolute left-[988px] top-[14px] w-[20px] h-[19px] border-2 border-[#cfcfcf]" />
        <svg className="absolute left-[1080px] top-[13px]" width="21" height="21" viewBox="0 0 21 21" stroke="#000" strokeWidth="1.5"><path d="M1 1L20 20M20 1L1 20" /></svg>
      </div>
      <div className="h-[38px] flex-none bg-white flex text-[24px] items-stretch">
        <span className="ml-[9px] w-[102px] flex items-center">分组管理</span>
        <span className="w-[110px] flex items-center justify-center bg-[#cce8ff] border border-[#99d1ff]">导入导出</span>
      </div>
      <div className="flex-1 flex flex-col pl-[23px] pr-[22px] pt-[26px] relative">
        <div className="w-[88px] h-[39px] flex-none bg-white border-t border-l border-r border-[#d9d9d9] flex items-center pl-[17px] text-[22px] text-[#555]">分组</div>
        <div className="h-[406px] flex-none bg-white border border-[#a0a0a0] pl-[4px] text-[22px] relative">
          <div className="absolute left-[11px] top-[18px] h-[150px] border-l border-dotted border-[#999]" />
          {[...groups, "自编"].map((g, i) => (
            <div key={g} className="h-[26px] flex items-center relative">
              <span className="w-[17px] h-[17px] flex-none bg-[#eeeeee] border border-[#a8a8a8] flex items-center justify-center text-[#334a90] text-[16px] leading-none">+</span>
              <span className={i === 6 ? "ml-[2px] h-[26px] px-[2px] flex items-center bg-[#0078d7] text-white" : "ml-[3px] text-[#222]"}>{g}</span>
            </div>
          ))}
        </div>
        <div className="mt-[16px] h-[191px] flex-none border border-[#a0a0a0] flex justify-end">
          <div className="w-[35px] border-l border-white flex flex-col justify-between items-center py-[16px]">
            <svg width="14" height="8" viewBox="0 0 14 8" fill="none" stroke="#cfcfcf" strokeWidth="2.5"><path d="M2 7L7 2L12 7" /></svg>
            <svg width="14" height="8" viewBox="0 0 14 8" fill="none" stroke="#cfcfcf" strokeWidth="2.5"><path d="M2 1L7 6L12 1" /></svg>
          </div>
        </div>
        <div className="mt-[26px] flex text-[22px] text-[#333]">
          <button className="w-[127px] h-[40px] bg-[#e1e1e1] border border-[#adadad]">新建</button>
          <button className="w-[127px] h-[40px] ml-[17px] bg-[#e1e1e1] border border-[#adadad]">修改</button>
          <button className="w-[127px] h-[40px] ml-[20px] bg-[#e1e1e1] border border-[#adadad]">删除</button>
          <button className="w-[127px] h-[40px] ml-auto mr-[39px] mt-[3px] bg-[#e1e1e1] border-2 border-[#0078d7]">关闭</button>
        </div>
        <div className="absolute left-[113px] top-0 w-[296px] h-[196px] bg-[#f0f0f0] border border-[#a8a8a8] shadow-[2px_2px_3px_rgba(0,0,0,0.45)] p-[2px] flex flex-col text-[24px]">
          {menu.map((m, i) => (
            <div key={m} className={`h-[38px] flex-none flex items-center pl-[47px] ${i === 0 ? "bg-[#91c9f7]" : ""}`}>{m}</div>
          ))}
        </div>
      </div>
    </div>
  );
}

function Workspace() {
  return (
    <div className="flex-1 bg-black border-4 border-[#d8d8d8] flex relative">
      <div className="w-[12px] flex-none flex gap-[2px] pl-[1px]">
        <div className="w-px bg-[#9a9a9a]" /><div className="w-px bg-[#9a9a9a]" /><div className="w-px bg-[#9a9a9a]" />
      </div>
      <div className="mt-[2px] mb-[5px] border border-[#c81010] flex flex-none h-[1505px]">
        <ChartPane />
        <QuotePanel />
      </div>
      <div className="absolute right-0 top-[713px] w-[15px] h-[113px] rounded-l-[6px] border border-[#666] bg-[repeating-linear-gradient(0deg,#2f4f2f_0,#2f4f2f_2px,#4a4f4a_2px,#4a4f4a_4px)]" />
    </div>
  );
}

function BottomTabs() {
  const tabs = ["我的板块", "金属板块", "黑色板块", "化工板块", "农产品板块", "油脂板块", "当日关注"];
  return (
    <div className="h-14 flex-none bg-[#26292e] flex items-stretch pl-[64px] pr-[24px] text-[24px] leading-none text-[#b8b8b8]">
      {tabs.map((t, i) => (
        <span key={t} className={`px-[12px] flex items-center border-b-[3px] ${i === 3 ? "text-[#ff7a1a] border-[#ff7a1a]" : "border-transparent"}`}>{t}</span>
      ))}
      <span className="ml-[14px] flex items-center text-[34px] font-bold text-[#b0b0b0]">+</span>
      <div className="ml-auto flex items-center text-[#ff7a1a] text-[26px]">
        <Headphones size={40} strokeWidth={2.5} />
        <span className="ml-[10px]">论坛提问</span>
      </div>
    </div>
  );
}

function Mono({ t, cls }: { t: string; cls?: string }) {
  return <span className={`font-['Liberation_Mono',monospace] text-[21.7px] ${cls ?? ""}`}>{t}</span>;
}

function StatusBar() {
  return (
    <div className={`h-14 flex-none bg-[#1b1c21] flex items-center pl-[9px] text-[23.5px] leading-none ${sans}`}>
      <span className="w-[209px] flex-none font-bold tracking-[-1.5px] text-[29px] text-[#f26a16] flex items-baseline">
        web<span className="text-[40px]">S</span>tock
      </span>
      <span className="w-[345px] flex-none text-[#38b038] flex items-center">上证指数<Mono t="3234.82 -19.80" cls="ml-[13px]" /></span>
      <span className="w-[350px] flex-none text-[#38b038] flex items-center">文华商品<Mono t="148.15 -0.81" cls="ml-[13px]" /></span>
      <span className="w-[108px] flex-none text-[#d0d4dc] text-[23px]">CRB指数</span>
      <span className="w-[535px] flex-none text-[#d0d4dc]"><Mono t="0.00 0.00" /></span>
      <span className="w-[660px] flex-none text-[#ff6a1a] text-[24.3px]">[提醒]有不法网站/直播间假冒文华进行诈骗</span>
      <span className="w-[101px] h-[39px] flex-none flex items-center justify-center bg-[#d0283a] border-b-2 border-[#a02030] text-[#f0e4e4] text-[24px]">期货户</span>
      <span className="ml-[7px] w-[101px] h-[39px] flex-none flex items-center justify-center bg-[#2e3238] border-2 border-[#45484c] text-[#a8acb0] text-[24px]">外盘户</span>
      <div className="ml-[21px] w-px h-[26px] bg-[#4a1c1c]" />
      <div className="ml-[25px] w-[35px] h-[30px] border-b-2 border-[#ddd] bg-[repeating-linear-gradient(0deg,#0c4a0c_0,#0c4a0c_2px,#16a016_2px,#16a016_3px)] flex items-end">
        <div className="w-full h-[10px] bg-[#00ff00]" />
      </div>
      <svg className="ml-[9px]" width="30" height="30" viewBox="0 0 30 30" fill="#20c020" shapeRendering="crispEdges">
        <rect x="0" y="22" width="6" height="6" /><rect x="8" y="16" width="6" height="12" /><rect x="16" y="9" width="6" height="19" /><rect x="24" y="0" width="6" height="28" />
      </svg>
      <span className="ml-[13px] text-[23px] text-[#b8bcc8]">15:37:45-DCE</span>
    </div>
  );
}

function Taskbar() {
  const cell = "w-[98px] h-full flex-none flex items-center justify-center relative";
  const bar = "absolute bottom-0 left-[10px] right-[10px] h-[4px] bg-[#a8a8a8]";
  return (
    <div className="h-20 flex-none flex text-white leading-none bg-[linear-gradient(90deg,#1d1d1d,#3a3a3a_45%,#434343_88%,#2a2a2a_95%,#1e1e1e)]">
      <div className={`${cell} -ml-px`}><FaWindows size={33} /></div>
      <div className={cell}>
        <svg width="36" height="38" viewBox="0 0 36 38" fill="none" stroke="#fff" strokeWidth="2.5"><circle cx="22" cy="14" r="11" /><path d="M14 22L3 35" /></svg>
      </div>
      <div className={cell}>
        <svg width="32" height="34" viewBox="0 0 32 34" fill="none" stroke="#fff" strokeWidth="2" shapeRendering="crispEdges"><path d="M1 1H24M1 32H24M3 12H22V22H3ZM30 1V7M30 26V32" /><rect x="27" y="13" width="5" height="6" fill="#fff" stroke="none" /></svg>
      </div>
      <div className={cell}>
        <svg width="40" height="42" viewBox="0 0 40 42" fill="none" stroke="#0a78d7" strokeWidth="7"><path d="M7 23H35C35 12 28 4 19 4C10 4 5 12 5 22C5 32 13 39 23 38C28 38 32 36 35 34" /></svg>
      </div>
      <div className={cell}>
        <svg width="44" height="44" viewBox="0 0 44 44">
          <path d="M22 22L5 12A20 20 0 0 1 41 16Z" fill="#d94a38" />
          <path d="M22 22L41 16A20 20 0 0 1 20 42Z" fill="#fbc02d" />
          <path d="M22 22L20 42A20 20 0 0 1 5 12Z" fill="#1da462" />
          <circle cx="22" cy="22" r="10" fill="#fff" />
          <circle cx="22" cy="22" r="7.5" fill="#4a8ce8" />
        </svg>
        <div className={bar} />
      </div>
      <div className={cell}>
        <svg width="42" height="34" viewBox="0 0 42 34">
          <path d="M0 0H14L18 6H0Z" fill="#d9a000" />
          <rect x="0" y="6" width="42" height="28" fill="#f4cf5c" />
          <path d="M14 34V20L21 15L28 20V34H24V24H18V34Z" fill="#3a96dc" />
        </svg>
        <div className={bar} />
      </div>
      <div className={cell}>
        <div className="w-[48px] h-[48px] bg-[#5c3f8c] flex items-center justify-center">
          <svg width="34" height="34" viewBox="0 0 34 34" shapeRendering="crispEdges">
            <rect width="34" height="34" fill="#fff" /><rect x="2" y="8" width="30" height="24" fill="#6d5aa0" />
            <rect x="6" y="12" width="8" height="5" fill="#ddd" /><rect x="16" y="12" width="12" height="5" fill="#fff" /><rect x="6" y="20" width="12" height="4" fill="#fff" /><rect x="20" y="20" width="8" height="10" fill="#ddd" />
          </svg>
        </div>
      </div>
      <div className={cell}>
        <svg width="46" height="44" viewBox="0 0 46 44"><polygon points="0,0 46,28 26,25 24,44 16,27" fill="#c71585" /></svg>
      </div>
      <div className={cell}>
        <svg width="46" height="44" viewBox="0 0 46 44" fill="none">
          <ellipse cx="26" cy="13" rx="16" ry="11" transform="rotate(-50 26 13)" fill="#fff" stroke="#cc3030" strokeWidth="1.5" />
          <circle cx="10" cy="26" r="8" fill="#8a8a8a" />
          <path d="M20 6L36 34M34 6L28 30" stroke="#999" strokeWidth="2" />
          <circle cx="35" cy="37" r="5" stroke="#2288cc" strokeWidth="2.5" />
        </svg>
        <div className={bar} />
      </div>
      <div className={cell}>
        <div className="w-[42px] h-[42px] rounded-[6px] bg-[#2c7ff0] flex items-center justify-center">
          <svg width="28" height="22" viewBox="0 0 28 22" fill="none" stroke="#fff" strokeWidth="2.5"><path d="M1 1H27L21 20L14 6L7 20Z" /></svg>
        </div>
        <div className={bar} />
      </div>
      <div className={`${cell} bg-[#666666]`}>
        <Wh6Logo size={48} />
        <div className="absolute bottom-0 inset-x-0 h-[4px] bg-[#a8a8a8]" />
      </div>
      <div className={`${cell} bg-[#b06a30]`}>
        <div className="w-[48px] h-[48px] bg-[#09b310] flex items-center justify-center"><FaWeixin size={36} color="#fff" /></div>
        <div className="absolute bottom-0 inset-x-0 h-[4px] bg-[#ff6a00]" />
      </div>
      <div className="ml-[850px] flex items-center h-full">
        <div className="w-[65px] flex justify-center">
          <svg width="28" height="18" viewBox="0 0 28 18" fill="none" stroke="#fff" strokeWidth="2"><path d="M2 17L14 2L26 17" /></svg>
        </div>
        <div className="w-[65px] flex justify-center">
          <div className="w-[28px] h-[30px] rounded-full bg-[#f5d33a] border-[4px] border-[#1c9c4c] flex items-center justify-center text-[#1c9c4c] text-[20px] font-bold">+</div>
        </div>
        <div className="w-[65px] flex justify-center">
          <svg width="32" height="30" viewBox="0 0 32 30" fill="none" stroke="#fff" strokeWidth="2"><path d="M4 1V6M10 1V6M2 6H12V14H7V26H28V10H14" /><rect x="10" y="14" width="16" height="10" fill="#fff" /></svg>
        </div>
        <div className="w-[65px] flex justify-center">
          <svg width="30" height="30" viewBox="0 0 30 30" fill="none" stroke="#fff" strokeWidth="1.6"><path d="M2 10H8L15 3V27L8 20H2ZM20 11L28 19M28 11L20 19" /></svg>
        </div>
        <div className="w-[65px] flex justify-center">
          <svg width="30" height="32" viewBox="0 0 30 32" fill="none" stroke="#fff" strokeWidth="2"><path d="M2 30C2 16 12 4 26 2M9 30C9 20 15 12 26 9M16 30C16 24 20 18 26 17" /><circle cx="24" cy="28" r="3" fill="#fff" /></svg>
        </div>
        <div className="w-[65px] flex justify-center">
          <svg width="32" height="34" viewBox="0 0 32 34" fill="none" stroke="#fff" strokeWidth="2"><path d="M12 32C2 30 3 20 10 20L22 3C26 -1 31 3 28 7L18 22C14 26 10 22 13 18" /></svg>
        </div>
        <div className="w-[65px] flex justify-center text-[32px]">中</div>
        <div className="w-[140px] flex flex-col items-center gap-[8px] text-[24px]">
          <span>15:37 周四</span>
          <span>2020/9/10</span>
        </div>
        <div className="w-[100px] flex justify-center relative">
          <div className="w-[28px] h-[34px] bg-white flex flex-col justify-center gap-[5px] px-[3px]">
            <div className="h-[3px] bg-[#333]" /><div className="h-[3px] bg-[#333]" /><div className="h-[3px] bg-[#333]" />
          </div>
          <span className="absolute left-[51px] top-[3px] w-[32px] h-[32px] rounded-full border-2 border-[#888] bg-[#2a2a2a] flex items-center justify-center text-[24px]">1</span>
        </div>
        <div className="w-px h-full bg-[#666]" />
      </div>
    </div>
  );
}

export default function App() {
  return (
    <div className={`w-[2736px] h-[1824px] flex flex-col overflow-hidden relative ${sans}`}>
      <TitleBar />
      <Toolbar />
      <div className="flex-1 flex min-h-0">
        <SideTabs />
        <Workspace />
      </div>
      <BottomTabs />
      <StatusBar />
      <Taskbar />
      <IndicatorDialog />
    </div>
  );
}
